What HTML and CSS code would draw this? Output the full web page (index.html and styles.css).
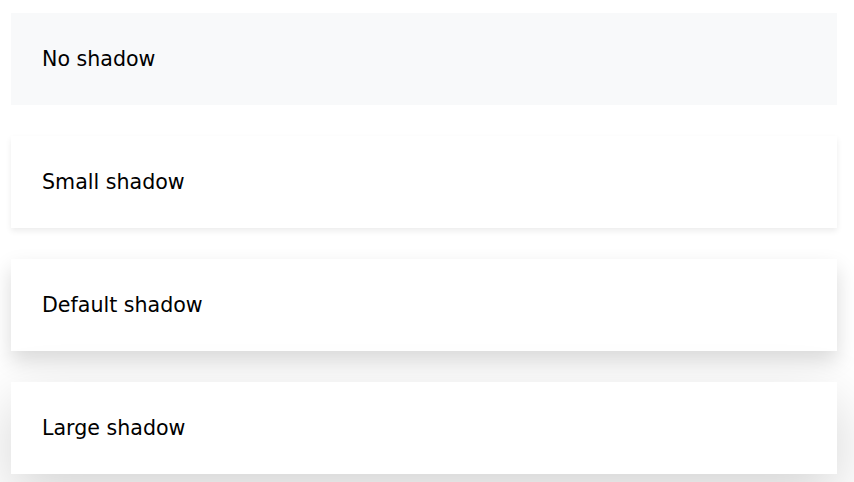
FILE: index.html
```html
<!DOCTYPE html>
<html lang="en">
<head>
    <meta charset="UTF-8">
    <meta name="viewport" content="width=device-width, initial-scale=1.0">
    <title>Shadows</title>
    <link rel="stylesheet" href="styles.css">
</head>
<body>
<div class="container">
    <div class="box shadow-none">No shadow</div>
    <div class="box shadow-sm">Small shadow</div>
    <div class="box shadow">Default shadow</div>
    <div class="box shadow-lg">Large shadow</div>
</div>
</body>
</html>
```

FILE: styles.css
```css
body {
    margin: 0;
    background-color: #fff;
    font-family: "DejaVu Sans", Verdana, sans-serif;
    color: #000;
}

.container {
    display: flex;
    flex-direction: column;
    gap: 31px;
    width: 826px;
    padding: 13px 11px;
}

.box {
    height: 92px;
    padding: 0 31px;
    display: flex;
    align-items: center;
    font-size: 20.6px;
    background-color: #fff;
}

.shadow-none {
    background-color: #f8f9fa;
}

.shadow-sm {
    box-shadow: 0 3px 6px rgba(0, 0, 0, 0.075);
}

.shadow {
    box-shadow: 0 10px 20px rgba(0, 0, 0, 0.15);
}

.shadow-lg {
    box-shadow: 0 20px 60px rgba(0, 0, 0, 0.175);
}
```
